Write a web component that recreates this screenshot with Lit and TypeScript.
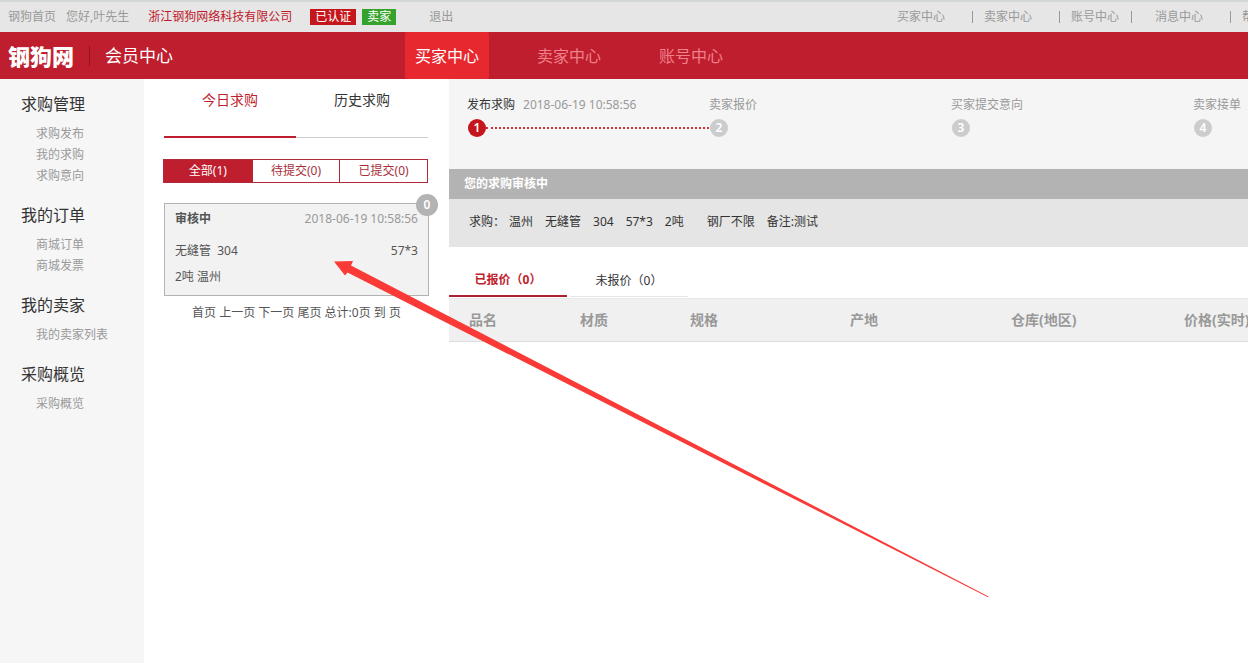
import { LitElement, html, css } from "lit";
import { customElement, state } from "lit/decorators.js";
import { classMap } from "lit/directives/class-map.js";

const TOP_LINKS = ["买家中心", "卖家中心", "账号中心", "消息中心", "帮助中心"];
const CENTERS = ["买家中心", "卖家中心", "账号中心"];
const MENU = [
  { title: "求购管理", items: ["求购发布", "我的求购", "求购意向"] },
  { title: "我的订单", items: ["商城订单", "商城发票"] },
  { title: "我的卖家", items: ["我的卖家列表"] },
  { title: "采购概览", items: ["采购概览"] },
];
const FILTERS = ["全部(1)", "待提交(0)", "已提交(0)"];
const STEPS = [
  { label: "发布求购", time: "2018-06-19 10:58:56" },
  { label: "卖家报价", time: "" },
  { label: "买家提交意向", time: "" },
  { label: "卖家接单", time: "" },
];
const COLUMNS = ["品名", "材质", "规格", "产地", "仓库(地区)", "价格(实时)"];

@customElement("app-root")
export class AppRoot extends LitElement {
  @state() private listTab = 0;
  @state() private filter = 0;
  @state() private quoteTab = 0;

  static styles = css`
    :host {
      display: block;
      position: relative;
      overflow: hidden;
      min-height: 100vh;
      background: #fff;
      color: #555;
      font: 12px/20px "Noto Sans", "Noto Sans CJK SC", sans-serif;
    }
    * {
      box-sizing: border-box;
    }
    a {
      color: inherit;
      text-decoration: none;
    }
    button {
      margin: 0;
      padding: 0;
      border: 0;
      background: none;
      color: inherit;
      font: inherit;
      cursor: pointer;
    }
    ul,
    ol,
    h2,
    p {
      margin: 0;
      padding: 0;
      list-style: none;
      font-weight: normal;
    }
    .page {
      display: flex;
      flex-direction: column;
      min-width: 1302px;
      min-height: 100vh;
    }

    .topbar {
      display: flex;
      align-items: center;
      height: 32px;
      padding: 0 12px 0 8px;
      border-top: 2px solid #d3d8d4;
      background: #e6e6e6;
      color: #999;
    }
    .hello {
      margin-left: 10px;
    }
    .company {
      margin: 0 18px 0 19px;
      color: #c0182a;
    }
    .tag {
      padding: 0 5px;
      background: #c4161c;
      color: #fff;
      line-height: 16px;
    }
    .tag.seller {
      margin-left: 6px;
      background: #35a22b;
    }
    .logout {
      margin-left: 33px;
    }
    .toplinks {
      display: flex;
      margin-left: auto;
    }
    .toplinks li {
      display: flex;
    }
    .toplinks li + li::before {
      content: "";
      width: 1px;
      height: 12px;
      margin: 4px 11px 4px 27px;
      background: #999;
    }
    .toplinks li:nth-child(4)::before {
      margin: 4px 23px 4px 12px;
    }

    .header {
      display: flex;
      align-items: center;
      height: 47px;
      padding-left: 8px;
      background: #bf1e2e;
      color: #fff;
    }
    .logo {
      font-size: 22px;
      font-weight: 900;
      font-family: "Noto Sans CJK SC", sans-serif;
      line-height: 47px;
    }
    .member {
      margin-left: 15px;
      padding-left: 15px;
      border-left: 1px solid #8f1522;
      font-size: 17px;
    }
    .centers {
      display: flex;
      gap: 38px;
      margin-left: 232px;
      color: #f0808a;
      font-size: 16px;
      line-height: 45px;
    }
    .centers a {
      padding: 2px 10px 0;
      border-radius: 2px;
    }
    .centers .on {
      background: #e8282f;
      color: #fff;
    }

    .body {
      display: flex;
      flex: 1;
    }
    .side {
      flex: 0 0 144px;
      padding: 10px 0 0 21px;
      background: #f6f6f6;
    }
    .group {
      margin-bottom: 14px;
    }
    .group h2 {
      margin-bottom: 4px;
      color: #333;
      font-size: 16px;
      line-height: 30px;
    }
    .group li {
      padding-left: 15px;
      color: #999;
      line-height: 21px;
    }

    .list {
      flex: 0 0 305px;
      padding: 0 20px;
    }
    .tabs {
      display: grid;
      grid-template-columns: 1fr 1fr;
      margin-right: 1px;
    }
    .tabs button {
      height: 59px;
      padding-bottom: 16px;
      border-bottom: 1px solid #ccd0ce;
      color: #333;
      font-size: 14px;
    }
    .tabs .on {
      border-bottom: 2px solid #bf1e2e;
      color: #bf1e2e;
    }
    .filters {
      display: grid;
      grid-template-columns: repeat(3, 1fr);
      height: 24px;
      margin: 21px 1px 0 -1px;
      border: 1px solid #b02a3a;
      color: #a8303c;
    }
    .filters button + button {
      border-left: 1px solid #b02a3a;
    }
    .filters .on {
      background: #bf1e2e;
      color: #fff;
    }
    .card {
      position: relative;
      display: block;
      margin-top: 20px;
      padding: 2px 10px 5px;
      border: 1px solid #b3b3b3;
      background: #f2f2f2;
    }
    .row {
      display: flex;
      justify-content: space-between;
      line-height: 26px;
      white-space: pre;
    }
    .row.first {
      padding-bottom: 6px;
    }
    .row time {
      color: #999;
    }
    .count {
      position: absolute;
      top: -10px;
      right: -10px;
      width: 22px;
      border-radius: 50%;
      background: #b3b3b3;
      color: #fff;
      font-weight: 600;
      line-height: 22px;
      text-align: center;
    }
    .pager {
      margin-top: 7px;
      text-align: center;
    }

    .main {
      flex: 1;
      min-width: 0;
      overflow: hidden;
    }
    .steps {
      display: flex;
      height: 90px;
      padding: 16px 0 0 18px;
      background: #f5f5f5;
      color: #999;
    }
    .step {
      flex: 0 0 242px;
    }
    .step.done .label {
      color: #333;
    }
    .step time {
      margin-left: 8px;
    }
    .mark {
      display: flex;
      align-items: center;
      padding: 4px 0 0 1px;
    }
    .dot {
      width: 18px;
      border-radius: 50%;
      background: #ccc;
      color: #fff;
      line-height: 18px;
      font-weight: 600;
      text-align: center;
    }
    .done .dot {
      background: #c4161c;
    }
    .done .mark::after {
      content: "";
      flex: 1;
      border-top: 2px dotted #d0323a;
    }
    .status {
      padding-left: 15px;
      background: #b3b3b3;
      color: #fff;
      font-weight: bold;
      line-height: 30px;
    }
    .detail {
      display: flex;
      gap: 12px;
      padding: 0 20px 2px;
      background: #e5e5e5;
      color: #333;
      line-height: 46px;
    }
    .detail .lead {
      margin-right: -8px;
    }
    .detail .mill {
      margin-left: 11px;
    }
    .quotes {
      display: flex;
      gap: 3px;
      padding-top: 16px;
    }
    .quotes button {
      width: 118px;
      height: 34px;
      padding-top: 2px;
      border-bottom: 1px solid #e6e6e6;
      color: #333;
    }
    .quotes .on {
      border-bottom: 2px solid #b01e34;
      color: #bf1e2e;
      font-weight: bold;
    }
    .goods {
      width: 100%;
      margin-top: 1px;
      border-collapse: separate;
      border-spacing: 0;
      table-layout: fixed;
    }
    .goods th {
      width: 110px;
      height: 44px;
      padding: 0 0 0 20px;
      border-top: 1px solid #e8e8e8;
      border-bottom: 1px solid #ddd;
      background: #f0f0f0;
      color: #999;
      font-size: 14px;
      text-align: left;
      white-space: nowrap;
    }
    .goods th:first-child {
      width: 111px;
    }
    .goods th:nth-child(n + 3) {
      width: 160px;
    }
    .goods th:nth-child(n + 4) {
      width: 161px;
    }
    .goods th:nth-child(5) {
      width: 173px;
    }
    .goods th:last-child {
      width: auto;
    }
    .arrow {
      position: absolute;
      left: 334px;
      top: 260px;
      pointer-events: none;
    }
  `;

  render() {
    return html`
      <div class="page">
        <div class="topbar">
          <a href="#">钢狗首页</a>
          <span class="hello">您好,叶先生</span>
          <a class="company" href="#">浙江钢狗网络科技有限公司</a>
          <span class="tag">已认证</span>
          <span class="tag seller">卖家</span>
          <a class="logout" href="#">退出</a>
          <ul class="toplinks">
            ${TOP_LINKS.map((t) => html`<li><a href="#">${t}</a></li>`)}
          </ul>
        </div>

        <header class="header">
          <a class="logo" href="#">钢狗网</a>
          <span class="member">会员中心</span>
          <nav class="centers">
            ${CENTERS.map((t, i) => html`<a href="#" class=${classMap({ on: i === 0 })}>${t}</a>`)}
          </nav>
        </header>

        <div class="body">
          <nav class="side">
            ${MENU.map(
              (g) => html`<div class="group">
                <h2>${g.title}</h2>
                <ul>
                  ${g.items.map((t) => html`<li><a href="#">${t}</a></li>`)}
                </ul>
              </div>`
            )}
          </nav>

          <section class="list">
            <div class="tabs">
              ${["今日求购", "历史求购"].map(
                (t, i) => html`<button
                  class=${classMap({ on: i === this.listTab })}
                  @click=${() => (this.listTab = i)}
                >${t}</button>`
              )}
            </div>
            <div class="filters">
              ${FILTERS.map(
                (t, i) => html`<button
                  class=${classMap({ on: i === this.filter })}
                  @click=${() => (this.filter = i)}
                >${t}</button>`
              )}
            </div>
            <a class="card" href="#">
              <div class="row first"><b>审核中</b><time>2018-06-19 10:58:56</time></div>
              <div class="row"><span>无缝管  304</span><span>57*3</span></div>
              <div class="row"><span>2吨 温州</span></div>
              <span class="count">0</span>
            </a>
            <p class="pager">
              <a href="#">首页</a> <a href="#">上一页</a> <a href="#">下一页</a> <a href="#">尾页</a>
              总计:0页 到 页
            </p>
          </section>

          <main class="main">
            <ol class="steps">
              ${STEPS.map(
                (s, i) => html`<li class=${classMap({ step: true, done: i === 0 })}>
                  <div><span class="label">${s.label}</span>${s.time ? html`<time>${s.time}</time>` : ""}</div>
                  <div class="mark"><span class="dot">${i + 1}</span></div>
                </li>`
              )}
            </ol>
            <p class="status">您的求购审核中</p>
            <div class="detail">
              <span class="lead">求购：</span><span>温州</span><span>无缝管</span><span>304</span
              ><span>57*3</span><span>2吨</span><span class="mill">钢厂不限</span><span>备注:测试</span>
            </div>
            <div class="quotes">
              ${["已报价（0）", "未报价（0）"].map(
                (t, i) => html`<button
                  class=${classMap({ on: i === this.quoteTab })}
                  @click=${() => (this.quoteTab = i)}
                >${t}</button>`
              )}
            </div>
            <table class="goods">
              <thead>
                <tr>
                  ${COLUMNS.map((t) => html`<th scope="col">${t}</th>`)}
                </tr>
              </thead>
            </table>
          </main>
        </div>
      </div>

      <svg class="arrow" width="656" height="340" viewBox="0 0 656 340" aria-hidden="true">
        <path d="M0 1.5 L19 1 L17 5.5 L654.5 336.500 L654 337.200 L13.500 12.500 L11 15.500 Z" fill="#f93a37" />
      </svg>
    `;
  }
}
